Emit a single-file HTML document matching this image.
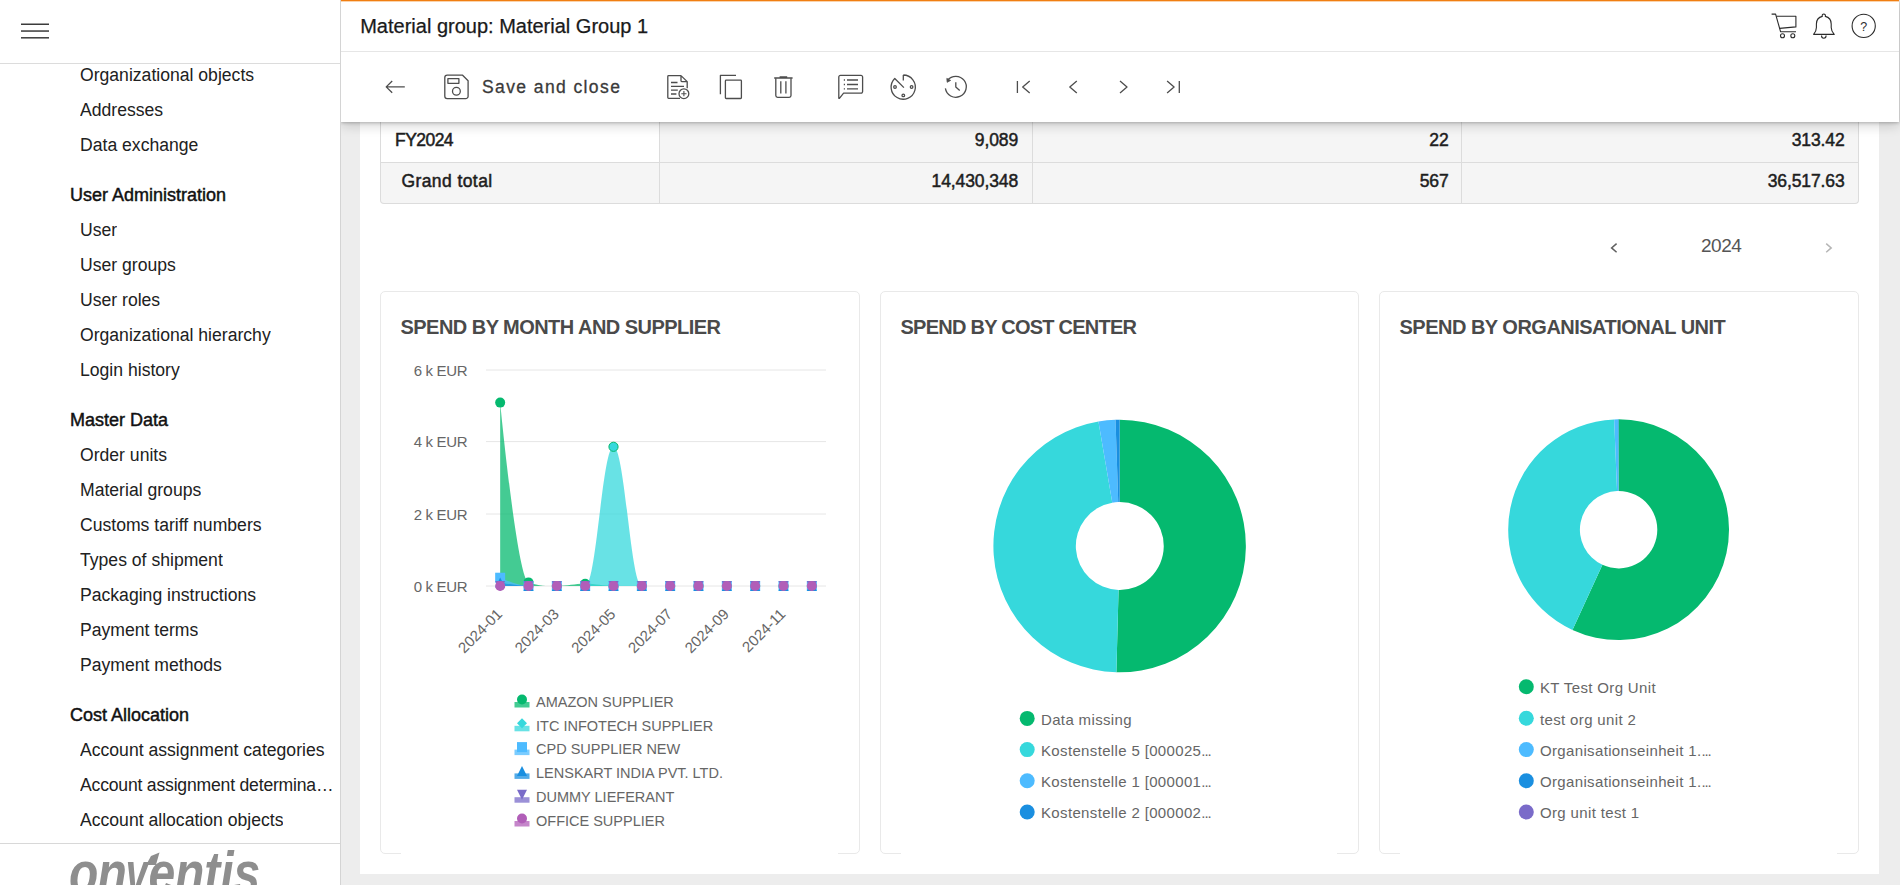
<!DOCTYPE html>
<html lang="en"><head><meta charset="utf-8"><title>Material group: Material Group 1</title>
<style>
*{box-sizing:border-box}
html,body{margin:0;padding:0}
body{width:1900px;height:885px;overflow:hidden;background:#ededed;font-family:"Liberation Sans",sans-serif;color:#222;position:relative}
#side{position:absolute;left:0;top:0;width:341px;height:885px;background:#fff;border-right:1px solid #d4d4d4;overflow:hidden;z-index:6}
#side .top{position:absolute;left:0;top:0;width:340px;height:64px;border-bottom:1px solid #dcdcdc}
.burger{position:absolute;left:21px;top:23px;width:28px;height:16px}
.burger i{position:absolute;left:0;width:28px;height:1.4px;background:#2b2b2b}
.si{position:absolute;left:80px;font-size:17.6px;line-height:30px;color:#212121;white-space:nowrap;max-width:256px;overflow:hidden;text-overflow:ellipsis}
.sh{position:absolute;left:70px;font-size:18px;line-height:30px;color:#111;white-space:nowrap;-webkit-text-stroke:0.45px #111}
#logo{position:absolute;left:0;top:843px;width:340px;height:42px;border-top:1px solid #d8d8d8;overflow:hidden}
#logo span{position:absolute;left:68.5px;top:-1px;font-size:60px;line-height:60px;font-weight:bold;font-style:italic;color:#8e8e8e;transform:scaleX(0.8);transform-origin:0 0;letter-spacing:-1px;white-space:nowrap}
#logo b{display:inline-block;transform:scaleX(0.82);transform-origin:0 100%;margin-right:-4.4px}
#logo em{letter-spacing:-0.1px}
#logo i{position:absolute;background:#8e8e8e;display:block}
#logo i.arm{left:141.5px;top:8px;width:26px;height:13px;clip-path:polygon(4.6px 13px,14.4px 13px,18px 0.6px,9.5px 4px)}
#panel{position:absolute;left:360px;top:0;width:1519px;height:874px;background:#fff}
#hdr{position:absolute;left:341px;top:0;width:1558px;height:122px;background:#fff;box-shadow:0 1px 3px rgba(0,0,0,.22),0 4px 11px rgba(0,0,0,.16);z-index:5}
#hdr .bar{position:absolute;left:0;top:0;width:100%;height:2px;background:linear-gradient(#f07e12 0,#f07e12 1px,#fbd3ab 1px,#fbd3ab 2px)}
#hdr .ttl{position:absolute;left:19.2px;top:14px;font-size:20px;line-height:24px;color:#1a1a1a;white-space:nowrap;-webkit-text-stroke:0.25px #1a1a1a}
#hdr .sep{position:absolute;left:0;top:51px;width:100%;height:1px;background:#e6e6e6}
#hdr .save{position:absolute;left:141px;top:75px;font-size:17.5px;line-height:24px;letter-spacing:1.4px;color:#3a3a3a;white-space:nowrap;-webkit-text-stroke:0.3px #3a3a3a}
#hdr svg{position:absolute;left:0;top:0}
table.t{position:absolute;left:380px;top:122px;width:1479px;border-collapse:collapse;font-size:17px;font-weight:bold;color:#222}
.row{position:absolute;left:380px;width:1479px;height:41px;background:#f5f5f5;border:1px solid #dcdcdc;border-top:0}
.cell{position:absolute;top:0;height:40px;line-height:36.4px;font-size:17.5px;letter-spacing:-0.12px;color:#1e1e1e;-webkit-text-stroke:0.5px #1e1e1e;border-right:1px solid #dcdcdc;text-align:right;padding-right:14.5px;white-space:nowrap}
.cell.l{text-align:left;padding:0}
.year{position:absolute;left:1701px;top:234px;font-size:19px;line-height:24px;letter-spacing:-0.45px;color:#555}
.card{position:absolute;top:291px;height:563px;border:1px solid #e9e9e9;border-radius:5px;background:#fff}
.card h3{position:absolute;left:19.5px;top:22px;margin:0;font-size:20px;line-height:26px;font-weight:bold;color:#4a4a4a;white-space:nowrap}
.cover{position:absolute;top:850px;height:6px;background:#fff}
svg text.ax{font-size:15px;letter-spacing:-0.35px;fill:#666;font-family:"Liberation Sans",sans-serif}
svg text.axx{font-size:15px;fill:#666;font-family:"Liberation Sans",sans-serif}
svg tspan.el{letter-spacing:-1.1px}
svg text.lg{font-size:14.5px;fill:#666;font-family:"Liberation Sans",sans-serif}
svg text.pl{font-size:15px;fill:#666;letter-spacing:0.35px;font-family:"Liberation Sans",sans-serif}
#charts{position:absolute;left:0;top:0;z-index:2}
</style></head><body>
<div id="panel"></div>

<div class="row" style="top:122px"><div class="cell l" style="left:0;width:279px;background:#fff;padding-left:14px;letter-spacing:-0.55px">FY2024</div><div class="cell" style="left:279px;width:373px;padding-right:14px">9,089</div><div class="cell" style="left:652px;width:429px;padding-right:12.5px">22</div><div class="cell" style="left:1081px;width:397px;border-right:0">313.42</div></div>
<div class="row" style="top:163px;border-radius:0 0 4px 4px"><div class="cell l" style="left:0;width:279px;padding-left:20.4px;letter-spacing:0.42px">Grand total</div><div class="cell" style="left:279px;width:373px;padding-right:14px">14,430,348</div><div class="cell" style="left:652px;width:429px;padding-right:12.5px">567</div><div class="cell" style="left:1081px;width:397px;border-right:0">36,517.63</div></div>

<div class="year">2024</div>
<svg width="1900" height="885" style="position:absolute;left:0;top:0" fill="none">
<path d="M1616.6,243.6 L1611.6,247.9 L1616.6,252.2" stroke="#606060" stroke-width="1.5"/>
<path d="M1826.2,243.6 L1831.2,247.9 L1826.2,252.2" stroke="#b5b5b5" stroke-width="1.5"/>
</svg>

<div class="card" style="left:380px;width:480px"><h3 style="letter-spacing:-0.54px">SPEND BY MONTH AND SUPPLIER</h3></div>
<div class="card" style="left:880px;width:479px"><h3 style="letter-spacing:-0.75px">SPEND BY COST CENTER</h3></div>
<div class="card" style="left:1379px;width:480px"><h3 style="letter-spacing:-0.51px">SPEND BY ORGANISATIONAL UNIT</h3></div>
<div class="cover" style="left:401px;width:437px"></div>
<div class="cover" style="left:901px;width:436px"></div>
<div class="cover" style="left:1400px;width:437px"></div>

<svg id="charts" width="1900" height="885" viewBox="0 0 1900 885">
<path d="M486,370.0 H826" stroke="#e6e6e6" stroke-width="1" fill="none"/>
<path d="M486,441.6 H826" stroke="#e6e6e6" stroke-width="1" fill="none"/>
<path d="M486,514.0 H826" stroke="#e6e6e6" stroke-width="1" fill="none"/>
<path d="M486,586.0 H826" stroke="#e6e6e6" stroke-width="1" fill="none"/>
<path d="M500.17,402.62 C500.17,402.62 517.17,578.80 528.50,582.40 C539.83,586.00 545.50,586.00 556.83,586.00 C568.17,586.00 573.83,583.84 585.17,583.84 C596.50,583.84 602.17,586.00 613.50,586.00 C624.83,586.00 630.50,586.00 641.83,586.00 C653.17,586.00 658.83,586.00 670.17,586.00 C681.50,586.00 687.17,586.00 698.50,586.00 C709.83,586.00 715.50,586.00 726.83,586.00 C738.17,586.00 743.83,586.00 755.17,586.00 C766.50,586.00 772.17,586.00 783.50,586.00 C794.83,586.00 811.83,586.00 811.83,586.00 L811.83,586.0 L500.17,586.0 Z" fill="#05b96f" fill-opacity="0.75"/>
<circle cx="500.17" cy="402.62" r="5" fill="#05b96f"/>
<circle cx="528.50" cy="582.40" r="5" fill="#05b96f"/>
<circle cx="556.83" cy="586.00" r="5" fill="#05b96f"/>
<circle cx="585.17" cy="583.84" r="5" fill="#05b96f"/>
<circle cx="613.50" cy="586.00" r="5" fill="#05b96f"/>
<circle cx="641.83" cy="586.00" r="5" fill="#05b96f"/>
<circle cx="670.17" cy="586.00" r="5" fill="#05b96f"/>
<circle cx="698.50" cy="586.00" r="5" fill="#05b96f"/>
<circle cx="726.83" cy="586.00" r="5" fill="#05b96f"/>
<circle cx="755.17" cy="586.00" r="5" fill="#05b96f"/>
<circle cx="783.50" cy="586.00" r="5" fill="#05b96f"/>
<circle cx="811.83" cy="586.00" r="5" fill="#05b96f"/>
<path d="M500.17,586.00 C500.17,586.00 517.17,586.00 528.50,586.00 C539.83,586.00 545.50,586.00 556.83,586.00 C568.17,586.00 573.83,586.00 585.17,586.00 C596.50,586.00 602.17,446.79 613.50,446.79 C624.83,446.79 630.50,586.00 641.83,586.00 C653.17,586.00 658.83,586.00 670.17,586.00 C681.50,586.00 687.17,586.00 698.50,586.00 C709.83,586.00 715.50,586.00 726.83,586.00 C738.17,586.00 743.83,586.00 755.17,586.00 C766.50,586.00 772.17,586.00 783.50,586.00 C794.83,586.00 811.83,586.00 811.83,586.00 L811.83,586.0 L500.17,586.0 Z" fill="#36d8dc" fill-opacity="0.75"/>
<path d="M500.17,581.00 L505.17,586.00 L500.17,591.00 L495.17,586.00Z" fill="#36d8dc"/>
<path d="M528.50,581.00 L533.50,586.00 L528.50,591.00 L523.50,586.00Z" fill="#36d8dc"/>
<path d="M556.83,581.00 L561.83,586.00 L556.83,591.00 L551.83,586.00Z" fill="#36d8dc"/>
<path d="M585.17,581.00 L590.17,586.00 L585.17,591.00 L580.17,586.00Z" fill="#36d8dc"/>
<circle cx="613.50" cy="446.79" r="4.6" fill="#36d8dc" stroke="#05b96f" stroke-width="1"/>
<path d="M641.83,581.00 L646.83,586.00 L641.83,591.00 L636.83,586.00Z" fill="#36d8dc"/>
<path d="M670.17,581.00 L675.17,586.00 L670.17,591.00 L665.17,586.00Z" fill="#36d8dc"/>
<path d="M698.50,581.00 L703.50,586.00 L698.50,591.00 L693.50,586.00Z" fill="#36d8dc"/>
<path d="M726.83,581.00 L731.83,586.00 L726.83,591.00 L721.83,586.00Z" fill="#36d8dc"/>
<path d="M755.17,581.00 L760.17,586.00 L755.17,591.00 L750.17,586.00Z" fill="#36d8dc"/>
<path d="M783.50,581.00 L788.50,586.00 L783.50,591.00 L778.50,586.00Z" fill="#36d8dc"/>
<path d="M811.83,581.00 L816.83,586.00 L811.83,591.00 L806.83,586.00Z" fill="#36d8dc"/>
<path d="M500.17,577.72 C500.17,577.72 517.17,586.00 528.50,586.00 C539.83,586.00 545.50,586.00 556.83,586.00 C568.17,586.00 573.83,586.00 585.17,586.00 C596.50,586.00 602.17,586.00 613.50,586.00 C624.83,586.00 630.50,586.00 641.83,586.00 C653.17,586.00 658.83,586.00 670.17,586.00 C681.50,586.00 687.17,586.00 698.50,586.00 C709.83,586.00 715.50,586.00 726.83,586.00 C738.17,586.00 743.83,586.00 755.17,586.00 C766.50,586.00 772.17,586.00 783.50,586.00 C794.83,586.00 811.83,586.00 811.83,586.00 L811.83,586.0 L500.17,586.0 Z" fill="#4dbbff" fill-opacity="0.75"/>
<rect x="495.17" y="572.72" width="10" height="10" fill="#4dbbff"/>
<rect x="523.50" y="581.00" width="10" height="10" fill="#4dbbff"/>
<rect x="551.83" y="581.00" width="10" height="10" fill="#4dbbff"/>
<rect x="580.17" y="581.00" width="10" height="10" fill="#4dbbff"/>
<rect x="608.50" y="581.00" width="10" height="10" fill="#4dbbff"/>
<rect x="636.83" y="581.00" width="10" height="10" fill="#4dbbff"/>
<rect x="665.17" y="581.00" width="10" height="10" fill="#4dbbff"/>
<rect x="693.50" y="581.00" width="10" height="10" fill="#4dbbff"/>
<rect x="721.83" y="581.00" width="10" height="10" fill="#4dbbff"/>
<rect x="750.17" y="581.00" width="10" height="10" fill="#4dbbff"/>
<rect x="778.50" y="581.00" width="10" height="10" fill="#4dbbff"/>
<rect x="806.83" y="581.00" width="10" height="10" fill="#4dbbff"/>
<path d="M500.17,582.40 C500.17,582.40 517.17,586.00 528.50,586.00 C539.83,586.00 545.50,586.00 556.83,586.00 C568.17,586.00 573.83,586.00 585.17,586.00 C596.50,586.00 602.17,586.00 613.50,586.00 C624.83,586.00 630.50,586.00 641.83,586.00 C653.17,586.00 658.83,586.00 670.17,586.00 C681.50,586.00 687.17,586.00 698.50,586.00 C709.83,586.00 715.50,586.00 726.83,586.00 C738.17,586.00 743.83,586.00 755.17,586.00 C766.50,586.00 772.17,586.00 783.50,586.00 C794.83,586.00 811.83,586.00 811.83,586.00 L811.83,586.0 L500.17,586.0 Z" fill="#1a8fe0" fill-opacity="0.75"/>
<path d="M500.17,577.40 L505.17,587.40 L495.17,587.40Z" fill="#1a8fe0"/>
<path d="M528.50,581.00 L533.50,591.00 L523.50,591.00Z" fill="#1a8fe0"/>
<path d="M556.83,581.00 L561.83,591.00 L551.83,591.00Z" fill="#1a8fe0"/>
<path d="M585.17,581.00 L590.17,591.00 L580.17,591.00Z" fill="#1a8fe0"/>
<path d="M613.50,581.00 L618.50,591.00 L608.50,591.00Z" fill="#1a8fe0"/>
<path d="M641.83,581.00 L646.83,591.00 L636.83,591.00Z" fill="#1a8fe0"/>
<path d="M670.17,581.00 L675.17,591.00 L665.17,591.00Z" fill="#1a8fe0"/>
<path d="M698.50,581.00 L703.50,591.00 L693.50,591.00Z" fill="#1a8fe0"/>
<path d="M726.83,581.00 L731.83,591.00 L721.83,591.00Z" fill="#1a8fe0"/>
<path d="M755.17,581.00 L760.17,591.00 L750.17,591.00Z" fill="#1a8fe0"/>
<path d="M783.50,581.00 L788.50,591.00 L778.50,591.00Z" fill="#1a8fe0"/>
<path d="M811.83,581.00 L816.83,591.00 L806.83,591.00Z" fill="#1a8fe0"/>
<path d="M500.17,586.00 C500.17,586.00 517.17,586.00 528.50,586.00 C539.83,586.00 545.50,586.00 556.83,586.00 C568.17,586.00 573.83,586.00 585.17,586.00 C596.50,586.00 602.17,586.00 613.50,586.00 C624.83,586.00 630.50,586.00 641.83,586.00 C653.17,586.00 658.83,586.00 670.17,586.00 C681.50,586.00 687.17,586.00 698.50,586.00 C709.83,586.00 715.50,586.00 726.83,586.00 C738.17,586.00 743.83,586.00 755.17,586.00 C766.50,586.00 772.17,586.00 783.50,586.00 C794.83,586.00 811.83,586.00 811.83,586.00 L811.83,586.0 L500.17,586.0 Z" fill="#7a6bc9" fill-opacity="0.75"/>
<path d="M495.17,581.00 L505.17,581.00 L500.17,591.00Z" fill="#7a6bc9"/>
<path d="M523.50,581.00 L533.50,581.00 L528.50,591.00Z" fill="#7a6bc9"/>
<path d="M551.83,581.00 L561.83,581.00 L556.83,591.00Z" fill="#7a6bc9"/>
<path d="M580.17,581.00 L590.17,581.00 L585.17,591.00Z" fill="#7a6bc9"/>
<path d="M608.50,581.00 L618.50,581.00 L613.50,591.00Z" fill="#7a6bc9"/>
<path d="M636.83,581.00 L646.83,581.00 L641.83,591.00Z" fill="#7a6bc9"/>
<path d="M665.17,581.00 L675.17,581.00 L670.17,591.00Z" fill="#7a6bc9"/>
<path d="M693.50,581.00 L703.50,581.00 L698.50,591.00Z" fill="#7a6bc9"/>
<path d="M721.83,581.00 L731.83,581.00 L726.83,591.00Z" fill="#7a6bc9"/>
<path d="M750.17,581.00 L760.17,581.00 L755.17,591.00Z" fill="#7a6bc9"/>
<path d="M778.50,581.00 L788.50,581.00 L783.50,591.00Z" fill="#7a6bc9"/>
<path d="M806.83,581.00 L816.83,581.00 L811.83,591.00Z" fill="#7a6bc9"/>
<path d="M500.17,586.00 C500.17,586.00 517.17,586.00 528.50,586.00 C539.83,586.00 545.50,586.00 556.83,586.00 C568.17,586.00 573.83,586.00 585.17,586.00 C596.50,586.00 602.17,586.00 613.50,586.00 C624.83,586.00 630.50,586.00 641.83,586.00 C653.17,586.00 658.83,586.00 670.17,586.00 C681.50,586.00 687.17,586.00 698.50,586.00 C709.83,586.00 715.50,586.00 726.83,586.00 C738.17,586.00 743.83,586.00 755.17,586.00 C766.50,586.00 772.17,586.00 783.50,586.00 C794.83,586.00 811.83,586.00 811.83,586.00 L811.83,586.0 L500.17,586.0 Z" fill="#b15eb8" fill-opacity="0.75"/>
<circle cx="500.17" cy="586.00" r="5" fill="#b15eb8"/>
<circle cx="528.50" cy="586.00" r="5" fill="#b15eb8"/>
<circle cx="556.83" cy="586.00" r="5" fill="#b15eb8"/>
<circle cx="585.17" cy="586.00" r="5" fill="#b15eb8"/>
<circle cx="613.50" cy="586.00" r="5" fill="#b15eb8"/>
<circle cx="641.83" cy="586.00" r="5" fill="#b15eb8"/>
<circle cx="670.17" cy="586.00" r="5" fill="#b15eb8"/>
<circle cx="698.50" cy="586.00" r="5" fill="#b15eb8"/>
<circle cx="726.83" cy="586.00" r="5" fill="#b15eb8"/>
<circle cx="755.17" cy="586.00" r="5" fill="#b15eb8"/>
<circle cx="783.50" cy="586.00" r="5" fill="#b15eb8"/>
<circle cx="811.83" cy="586.00" r="5" fill="#b15eb8"/>
<text x="467.2" y="376.3" text-anchor="end" class="ax">6 k EUR</text>
<text x="467.2" y="447.00000000000006" text-anchor="end" class="ax">4 k EUR</text>
<text x="467.2" y="520.3" text-anchor="end" class="ax">2 k EUR</text>
<text x="467.2" y="592.3" text-anchor="end" class="ax">0 k EUR</text>
<text transform="translate(503.17,615.0) rotate(-45)" text-anchor="end" class="axx">2024-01</text>
<text transform="translate(559.83,615.0) rotate(-45)" text-anchor="end" class="axx">2024-03</text>
<text transform="translate(616.50,615.0) rotate(-45)" text-anchor="end" class="axx">2024-05</text>
<text transform="translate(673.17,615.0) rotate(-45)" text-anchor="end" class="axx">2024-07</text>
<text transform="translate(729.83,615.0) rotate(-45)" text-anchor="end" class="axx">2024-09</text>
<text transform="translate(786.50,615.0) rotate(-45)" text-anchor="end" class="axx">2024-11</text>
<rect x="514.5" y="702.0" width="15" height="5.5" fill="#05b96f" fill-opacity="0.75"/>
<circle cx="522.00" cy="699.50" r="5" fill="#05b96f"/>
<text x="536" y="706.8" class="lg">AMAZON SUPPLIER</text>
<rect x="514.5" y="725.8" width="15" height="5.5" fill="#36d8dc" fill-opacity="0.75"/>
<path d="M522.00,718.30 L527.00,723.30 L522.00,728.30 L517.00,723.30Z" fill="#36d8dc"/>
<text x="536" y="730.5999999999999" class="lg">ITC INFOTECH SUPPLIER</text>
<rect x="514.5" y="749.5999999999999" width="15" height="5.5" fill="#4dbbff" fill-opacity="0.75"/>
<rect x="517.00" y="742.10" width="10" height="10" fill="#4dbbff"/>
<text x="536" y="754.3999999999999" class="lg">CPD SUPPLIER NEW</text>
<rect x="514.5" y="773.3999999999999" width="15" height="5.5" fill="#1a8fe0" fill-opacity="0.75"/>
<path d="M522.00,765.90 L527.00,775.90 L517.00,775.90Z" fill="#1a8fe0"/>
<text x="536" y="778.1999999999998" class="lg">LENSKART INDIA PVT. LTD.</text>
<rect x="514.5" y="797.1999999999998" width="15" height="5.5" fill="#7a6bc9" fill-opacity="0.75"/>
<path d="M517.00,789.70 L527.00,789.70 L522.00,799.70Z" fill="#7a6bc9"/>
<text x="536" y="801.9999999999998" class="lg">DUMMY LIEFERANT</text>
<rect x="514.5" y="820.9999999999998" width="15" height="5.5" fill="#b15eb8" fill-opacity="0.75"/>
<circle cx="522.00" cy="818.50" r="5" fill="#b15eb8"/>
<text x="536" y="825.7999999999997" class="lg">OFFICE SUPPLIER</text>
<path d="M1119.70,419.70 A126.3,126.3 0 1 1 1116.39,672.26 L1118.55,589.88 A43.9,43.9 0 1 0 1119.70,502.10Z" fill="#05b96f"/>
<path d="M1116.39,672.26 A126.3,126.3 0 0 1 1098.42,421.51 L1112.30,502.73 A43.9,43.9 0 0 0 1118.55,589.88Z" fill="#36d8dc"/>
<path d="M1098.42,421.51 A126.3,126.3 0 0 1 1115.51,419.77 L1118.24,502.12 A43.9,43.9 0 0 0 1112.30,502.73Z" fill="#4dbbff"/>
<path d="M1115.51,419.77 A126.3,126.3 0 0 1 1119.70,419.70 L1119.70,502.10 A43.9,43.9 0 0 0 1118.24,502.12Z" fill="#1a8fe0"/>
<circle cx="1027.2" cy="718.4" r="7.5" fill="#05b96f"/>
<text x="1041" y="724.6" class="pl">Data missing</text>
<circle cx="1027.2" cy="749.6" r="7.5" fill="#36d8dc"/>
<text x="1041" y="755.8000000000001" class="pl">Kostenstelle 5 [000025<tspan class="el">...</tspan></text>
<circle cx="1027.2" cy="780.8" r="7.5" fill="#4dbbff"/>
<text x="1041" y="787.0" class="pl">Kostenstelle 1 [000001<tspan class="el">...</tspan></text>
<circle cx="1027.2" cy="812.0" r="7.5" fill="#1a8fe0"/>
<text x="1041" y="818.2" class="pl">Kostenstelle 2 [000002<tspan class="el">...</tspan></text>
<path d="M1618.60,419.30 A110.4,110.4 0 1 1 1572.47,630.00 L1602.43,564.86 A38.7,38.7 0 1 0 1618.60,491.00Z" fill="#05b96f"/>
<path d="M1572.47,630.00 A110.4,110.4 0 0 1 1614.17,419.39 L1617.05,491.03 A38.7,38.7 0 0 0 1602.43,564.86Z" fill="#36d8dc"/>
<path d="M1614.17,419.39 A110.4,110.4 0 0 1 1618.02,419.30 L1618.40,491.00 A38.7,38.7 0 0 0 1617.05,491.03Z" fill="#4dbbff"/>
<path d="M1618.02,419.30 A110.4,110.4 0 0 1 1618.60,419.30 L1618.60,491.00 A38.7,38.7 0 0 0 1618.40,491.00Z" fill="#1a8fe0"/>
<circle cx="1526.3" cy="686.7" r="7.5" fill="#05b96f"/>
<text x="1540" y="692.9000000000001" class="pl">KT Test Org Unit</text>
<circle cx="1526.3" cy="718.3" r="7.5" fill="#36d8dc"/>
<text x="1540" y="724.5" class="pl">test org unit 2</text>
<circle cx="1526.3" cy="749.6" r="7.5" fill="#4dbbff"/>
<text x="1540" y="755.8000000000001" class="pl">Organisationseinheit 1.<tspan class="el">...</tspan></text>
<circle cx="1526.3" cy="780.8" r="7.5" fill="#1a8fe0"/>
<text x="1540" y="787.0" class="pl">Organisationseinheit 1.<tspan class="el">...</tspan></text>
<circle cx="1526.3" cy="812.0" r="7.5" fill="#7a6bc9"/>
<text x="1540" y="818.2" class="pl">Org unit test 1</text>
</svg>

<div id="side">
<div class="top"><svg width="70" height="60" style="position:absolute;left:0;top:0"><rect x="21" y="23.55" width="28" height="1.35" fill="#262626"/><rect x="21" y="30.25" width="28" height="1.6" fill="#484848"/><rect x="21" y="37.15" width="28" height="1.35" fill="#262626"/></svg></div>
<div class="si" style="top:60px">Organizational objects</div>
<div class="si" style="top:95px">Addresses</div>
<div class="si" style="top:130px">Data exchange</div>
<div class="sh" style="top:180px">User Administration</div>
<div class="si" style="top:215px">User</div>
<div class="si" style="top:250px">User groups</div>
<div class="si" style="top:285px">User roles</div>
<div class="si" style="top:320px">Organizational hierarchy</div>
<div class="si" style="top:355px">Login history</div>
<div class="sh" style="top:405px">Master Data</div>
<div class="si" style="top:440px">Order units</div>
<div class="si" style="top:475px">Material groups</div>
<div class="si" style="top:510px">Customs tariff numbers</div>
<div class="si" style="top:545px">Types of shipment</div>
<div class="si" style="top:580px">Packaging instructions</div>
<div class="si" style="top:615px">Payment terms</div>
<div class="si" style="top:650px">Payment methods</div>
<div class="sh" style="top:700px">Cost Allocation</div>
<div class="si" style="top:735px">Account assignment categories</div>
<div class="si" style="top:770px;letter-spacing:-0.2px;max-width:257px">Account assignment determination</div>
<div class="si" style="top:805px">Account allocation objects</div>
<div id="logo" aria-label="onventis"><span>on<b>v</b><em>entis</em></span><i class="arm"></i></div>
</div>

<div id="hdr">
<div class="bar"></div>
<div class="ttl">Material group: Material Group 1</div>
<div class="sep"></div>
<div class="save">Save and close</div>
<svg width="1558" height="122" viewBox="341 0 1558 122">
<g stroke="#4d4d4d" stroke-width="1.3" fill="none" stroke-linecap="butt" stroke-linejoin="round">
<!-- back arrow -->
<path d="M392.2,81 L386.2,86.9 L392.2,92.8 M386.4,86.9 H404.8"/>
<!-- save -->
<path d="M446.8,75.2 H462.6 L468.1,80.7 V96.2 a2.4,2.4 0 0 1 -2.4,2.4 H447.2 a2.4,2.4 0 0 1 -2.4,-2.4 V77.6 a2.4,2.4 0 0 1 2.4,-2.4Z"/>
<rect x="447.9" y="78.7" width="11" height="4.6"/>
<circle cx="456.4" cy="91.3" r="3.9"/>
<!-- doc plus -->
<path d="M681,75.6 H668.6 a0.8,0.8 0 0 0 -0.8,0.8 V97.5 a0.8,0.8 0 0 0 0.8,0.8 H680 M687.2,88.2 V81.6 L681,75.6 V80.8 a0.8,0.8 0 0 0 0.8,0.8 H687.2"/>
<path d="M671,82.5 H677.5 M671,86.4 H684 M671,90.2 H677.8 M671,94 H676.4"/>
<circle cx="683.9" cy="93.7" r="4.9"/>
<path d="M681.3,93.7 H686.5 M683.9,91.1 V96.3" stroke-width="1.1"/>
<!-- copy -->
<path d="M736,75.4 H720.4 V94.2"/>
<rect x="725.4" y="80.1" width="16" height="18.4" rx="0.8"/>
<!-- trash -->
<path d="M774.2,78 H792.6 M779.6,77 H787.2"/>
<path d="M775.8,78.3 V95.6 a1.8,1.8 0 0 0 1.8,1.8 H789.2 a1.8,1.8 0 0 0 1.8,-1.8 V78.3"/>
<path d="M780.8,81.2 V93.6 M785.9,81.2 V93.6"/>
<!-- comments -->
<path d="M840.4,75.4 H861 a1.6,1.6 0 0 1 1.6,1.6 V91.6 a1.6,1.6 0 0 1 -1.6,1.6 H843.6 L839.4,98.4 a0.4,0.4 0 0 1 -0.6,-0.3 V77 a1.6,1.6 0 0 1 1.6,-1.6Z"/>
<path d="M847,80 H858 M847,84.5 H858 M847,88.8 H858 M843.8,80 H845 M843.8,84.5 H845 M843.8,88.8 H845"/>
<!-- pie clock -->
<path d="M903.3,75 A12.1,12.1 0 1 1 894.75,78.45 L903.9,87.6 M903.3,75 V80.6"/>
<circle cx="895" cy="87" r="1.3"/><circle cx="911.6" cy="87" r="1.3"/><circle cx="903.3" cy="95.4" r="1.3"/>
<!-- history -->
<path d="M945.4,88.4 A10.5,10.5 0 1 0 947.6,80.2"/>
<path d="M946.8,78.4 L950.6,80.4 L947.2,82.3Z" fill="#4d4d4d" stroke-width="0.8"/>
<path d="M955.8,82.2 V87 L959.7,90.6"/>
<!-- nav -->
<path d="M1017.4,81 V92.9 M1029.7,81 L1022.7,87 L1029.7,93"/>
<path d="M1076.8,81 L1069.8,87 L1076.8,93"/>
<path d="M1120,81 L1127,87 L1120,93"/>
<path d="M1167.1,81 L1174.1,87 L1167.1,93 M1179.3,81 V92.9"/>
</g>
<g stroke="#2b2b2b" stroke-width="1.1" fill="none" stroke-linejoin="round">
<!-- cart -->
<path d="M1771.6,14.1 H1775.6 L1780.6,31.8 H1796"/>
<path d="M1776.4,16.2 H1795.9 V26.9 L1779.6,28.4"/>
<circle cx="1782.5" cy="35.8" r="2"/><circle cx="1792.8" cy="35.8" r="2"/>
<!-- bell -->
<path d="M1813.6,34.4 H1834.2 C1832.4,32.2 1831.2,30.4 1831.2,27.4 V24 C1831.2,20 1828.8,17.2 1825.3,16.4 C1825.8,14.8 1824.8,14 1823.8,14 C1822.8,14 1821.8,14.8 1822.3,16.4 C1818.8,17.2 1816.4,20 1816.4,24 V27.4 C1816.4,30.4 1815.4,32.2 1813.6,34.4Z"/>
<path d="M1821.5,35.6 a2.3,2.7 0 0 0 4.6,0"/>
<!-- help -->
<circle cx="1863.7" cy="25.9" r="11.6"/>
</g>
<text x="1863.8" y="31" text-anchor="middle" font-size="12.5" fill="#2b2b2b" font-family="Liberation Sans, sans-serif">?</text>
</svg>
</div>
</body></html>
